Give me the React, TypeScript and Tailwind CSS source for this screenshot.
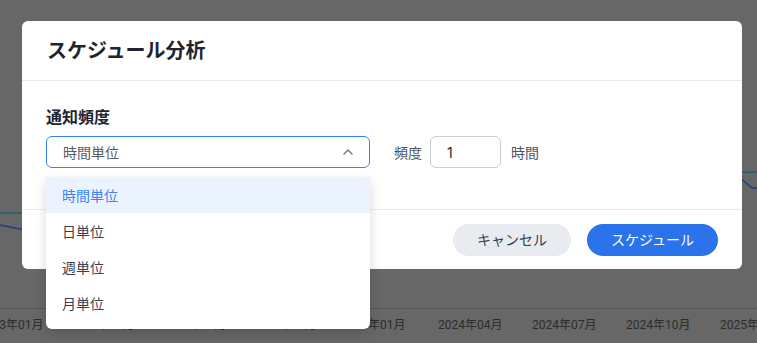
import { ChevronUp } from "lucide-react";

// tick positions on the time axis behind the dialog
const axisLabels: [string, number][] = [
  ["2023年01月", -21],
  ["2023年04月", 70],
  ["2023年07月", 162],
  ["2023年10月", 252],
  ["2024年01月", 341],
  ["2024年04月", 438],
  ["2024年07月", 532],
  ["2024年10月", 626],
  ["2025年01月", 720],
];

const options = ["時間単位", "日単位", "週単位", "月単位"];

function BackgroundChart() {
  return (
    <div className="absolute inset-0">
      <svg className="absolute inset-0" width="757" height="343" viewBox="0 0 757 343">
        <polyline points="0,213 30,213" fill="none" stroke="#1f6168" strokeWidth="1.5" />
        <polyline points="0,225 30,231" fill="none" stroke="#1d3f82" strokeWidth="1.5" />
        <polyline points="735,172.5 757,172" fill="none" stroke="#1f6168" strokeWidth="1.5" />
        <polyline points="738,176 752,188 757,188" fill="none" stroke="#1d3f82" strokeWidth="1.5" />
      </svg>
      <div className="absolute left-0 right-0 top-[308px] h-px bg-[#575757]" />
      <div className="absolute left-0 right-0 top-[317px] h-4 font-['Roboto','Noto_Sans_CJK_JP',sans-serif] text-[12px] leading-4 text-[#2c2c2c]">
        {axisLabels.map(([l, x]) => (
          <span key={l} className="absolute top-0 whitespace-nowrap" style={{ left: x }}>
            {l}
          </span>
        ))}
      </div>
    </div>
  );
}

export default function App() {
  return (
    <div className="relative h-[343px] w-[757px] overflow-hidden bg-[#676767] font-['Inter','Noto_Sans_CJK_JP',sans-serif]">
      <BackgroundChart />

      <div className="absolute left-[22px] top-[21px] flex h-[248px] w-[720px] flex-col rounded-md bg-white">
        <div className="flex h-[60px] items-center border-b border-[#e6e9ef] px-[25px]">
          <h2 className="text-[20px] font-bold text-[#1f2430]">スケジュール分析</h2>
        </div>

        <div className="flex-1 px-6 pt-[25px]">
          <p className="text-[16px] font-semibold leading-[22px] text-[#1f2430]">通知頻度</p>
          <div className="mt-[8px] flex items-center">
            <div className="flex h-8 w-[324px] items-center justify-between rounded-md border border-[#3b82f6] pl-4 pr-[13px]">
              <span className="text-[14px] text-[#555b65]">時間単位</span>
              <ChevronUp size={16} strokeWidth={2} className="text-[#6b7280]" />
            </div>
            <span className="ml-6 text-[14px] text-[#4b5563]">頻度</span>
            <div className="ml-2 flex h-8 w-[71px] items-center rounded-md border border-[#c9cfd8] pl-4 text-[14px] text-[#1f2430]">
              1
            </div>
            <span className="ml-2.5 text-[14px] text-[#4b5563]">時間</span>
          </div>
        </div>

        <div className="flex h-[60px] items-center justify-end gap-4 border-t border-[#e6e9ef] pr-6">
          <button className="h-8 rounded-full bg-[#e8ebf0] px-6 text-[14px] text-[#374151]">
            キャンセル
          </button>
          <button className="h-8 rounded-full bg-[#2a73ea] px-6 text-[14px] text-white">
            スケジュール
          </button>
        </div>
      </div>

      <div className="absolute left-[46px] top-[177px] w-[324px] rounded-b-md bg-white pb-2 shadow-[0_4px_12px_rgba(0,0,0,0.15)]">
        {options.map((o, i) => (
          <div
            key={o}
            className={
              i === 0
                ? "flex h-9 items-center bg-[#ebf3fe] pl-4 text-[14px] text-[#3b82f6]"
                : "flex h-9 items-center pl-4 text-[14px] text-[#374151]"
            }
          >
            {o}
          </div>
        ))}
      </div>
    </div>
  );
}
